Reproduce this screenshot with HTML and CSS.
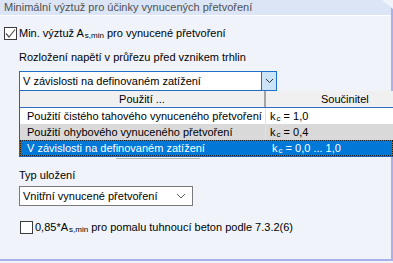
FILE: index.html
```html
<!DOCTYPE html>
<html lang="cs">
<head>
<meta charset="utf-8">
<title>Minimální výztuž</title>
<link rel="stylesheet" href="styles.css">
</head>
<body>
<div class="panel">
  <div class="panel-head">Minimální výztuž pro účinky vynucených přetvoření</div>
  <div class="panel-body">
    <div class="check-row">
      <span class="checkbox">
        <svg width="13" height="13" viewBox="0 0 13 13"><polyline points="2,6.5 5,10 11,2.5" fill="none" stroke="#555" stroke-width="1.2"/></svg>
      </span>
      <span class="check-label">Min. výztuž A<sub>s,min</sub> pro vynucené přetvoření</span>
    </div>
    <div class="indent">
      <div class="label first">Rozložení napětí v průřezu před vznikem trhlin</div>
      <div class="combo-wrap">
        <div class="combo focused">
          <span class="combo-text">V závislosti na definovaném zatížení</span>
          <span class="combo-btn">
            <svg width="9" height="6" viewBox="0 0 9 6"><polyline points="1,1 4.5,4.5 8,1" fill="none" stroke="#333" stroke-width="1"/></svg>
          </span>
        </div>
        <div class="popup">
          <div class="prow phead">
            <span class="c1">Použití ...</span>
            <span class="c2">Součinitel</span>
          </div>
          <div class="prow">
            <span class="c1">Použití čistého tahového vynuceného přetvoření</span>
            <span class="c2">k<sub>c</sub> = 1,0</span>
          </div>
          <div class="prow hover">
            <span class="c1">Použití ohybového vynuceného přetvoření</span>
            <span class="c2">k<sub>c</sub> = 0,4</span>
          </div>
          <div class="prow selected">
            <span class="c1">V závislosti na definovaném zatížení</span>
            <span class="c2">k<sub>c</sub> = 0,0 ... 1,0</span>
          </div>
          <div class="scroll-edge"></div>
        </div>
      </div>
      <div class="label second">Typ uložení</div>
      <div class="combo plain">
        <span class="combo-text">Vnitřní vynucené přetvoření</span>
        <span class="combo-chev">
          <svg width="10" height="6" viewBox="0 0 10 6"><polyline points="1,1 5,5 9,1" fill="none" stroke="#606060" stroke-width="1"/></svg>
        </span>
      </div>
    </div>
    <div class="check-row second-check">
      <span class="checkbox"></span>
      <span class="check-label">0,85*A<sub>s,min</sub> pro pomalu tuhnoucí beton podle 7.3.2(6)</span>
    </div>
  </div>
</div>
</body>
</html>
```
FILE: styles.css
```css
html, body {
  margin: 0;
  padding: 0;
}
body {
  width: 393px;
  height: 263px;
  overflow: hidden;
  background: #f0f4fa;
  font-family: "Liberation Sans", Arial, sans-serif;
  font-size: 11px;
  color: #000;
}
.panel {
  box-sizing: border-box;
  width: 393px;
  height: 261px;
  background: #f0f4fa;
  border-right: 2px solid #a9b0ea;
  border-bottom: 2px solid #a9b0ea;
  clip-path: polygon(0 0, 382px 0, 100% 9px, 100% 100%, 0 100%);
}
.panel-head {
  height: 15px;
  line-height: 15px;
  padding-left: 4px;
  background: #dbe5f5;
  color: #505050;
  border-bottom: 1px solid #ffffff;
  white-space: nowrap;
}
.panel-body {
  padding: 10px 0 0 4px;
}
.check-row {
  display: flex;
  align-items: center;
  height: 14px;
  white-space: nowrap;
}
.checkbox {
  box-sizing: border-box;
  width: 13px;
  height: 13px;
  border: 1px solid #3c3c3c;
  background: #ffffff;
  display: flex;
  align-items: center;
  justify-content: center;
  flex: none;
}
.checkbox svg {
  display: block;
  margin: -1px;
}
.check-label {
  margin-left: 2px;
  line-height: 14px;
}
sub {
  font-size: 8px;
  vertical-align: -1px;
  line-height: 0;
  margin-left: 1px;
}
.indent {
  margin-left: 15px;
}
.label {
  line-height: 14px;
  white-space: nowrap;
}
.label.first {
  margin-top: 10px;
}
.combo-wrap {
  position: relative;
  margin-top: 7px;
}
.combo {
  box-sizing: border-box;
  height: 20px;
  display: flex;
  align-items: stretch;
  background: #ffffff;
}
.combo.focused {
  width: 258px;
  border: 1px solid #1f6fc4;
}
.combo.plain {
  width: 174px;
  border: 1px solid #7a7a7a;
  margin-top: 4px;
}
.combo-text {
  flex: 1;
  padding-left: 3px;
  line-height: 18px;
  white-space: nowrap;
}
.combo-btn {
  width: 14px;
  background: #cce4f7;
  border-left: 1px solid #1f6fc4;
  display: flex;
  align-items: center;
  justify-content: center;
}
.combo-chev {
  width: 22px;
  display: flex;
  align-items: center;
  justify-content: center;
}
.popup {
  position: absolute;
  left: 0;
  top: 20px;
  width: 374px;
  box-sizing: border-box;
  border: 1px solid #1f64b4;
  border-top: none;
  border-right: none;
  background: #ffffff;
}
.prow {
  display: grid;
  grid-template-columns: 246px 1fr;
  height: 16px;
  line-height: 16px;
  white-space: nowrap;
  overflow: hidden;
}
.prow .c1 {
  padding-left: 7px;
  overflow: hidden;
  border-right: 1px solid #e4e4e4;
}
.prow .c2 {
  padding-left: 4px;
  overflow: hidden;
}
.prow.phead {
  height: 17px;
  line-height: 16px;
  background: #f0f0f0;
  border-bottom: 1px solid #2f6fc0;
  box-sizing: border-box;
}
.prow.phead .c1 {
  text-align: center;
  padding-left: 0;
  border-right: 2px solid #a4a4a4;
}
.prow.phead .c2 {
  padding-left: 55px;
}
.prow.hover {
  background: #d9d9d9;
}
.prow.selected {
  box-sizing: border-box;
  color: #ffffff;
  border: 1px dotted #1a1a1a;
  line-height: 14px;
  background: linear-gradient(#0078d7, #0078d7) padding-box, linear-gradient(#a8702e, #a8702e) border-box;
}
.prow.selected .c1 {
  padding-left: 6px;
  border-right: none;
}
.prow.selected .c2 {
  padding-left: 5px;
}
.scroll-edge {
  position: absolute;
  left: 96px;
  bottom: -3px;
  width: 84px;
  height: 1px;
  background: #b8b8b8;
}
.label.second {
  margin-top: 77px;
}
.second-check {
  margin-left: 16px;
  margin-top: 14px;
}
```
